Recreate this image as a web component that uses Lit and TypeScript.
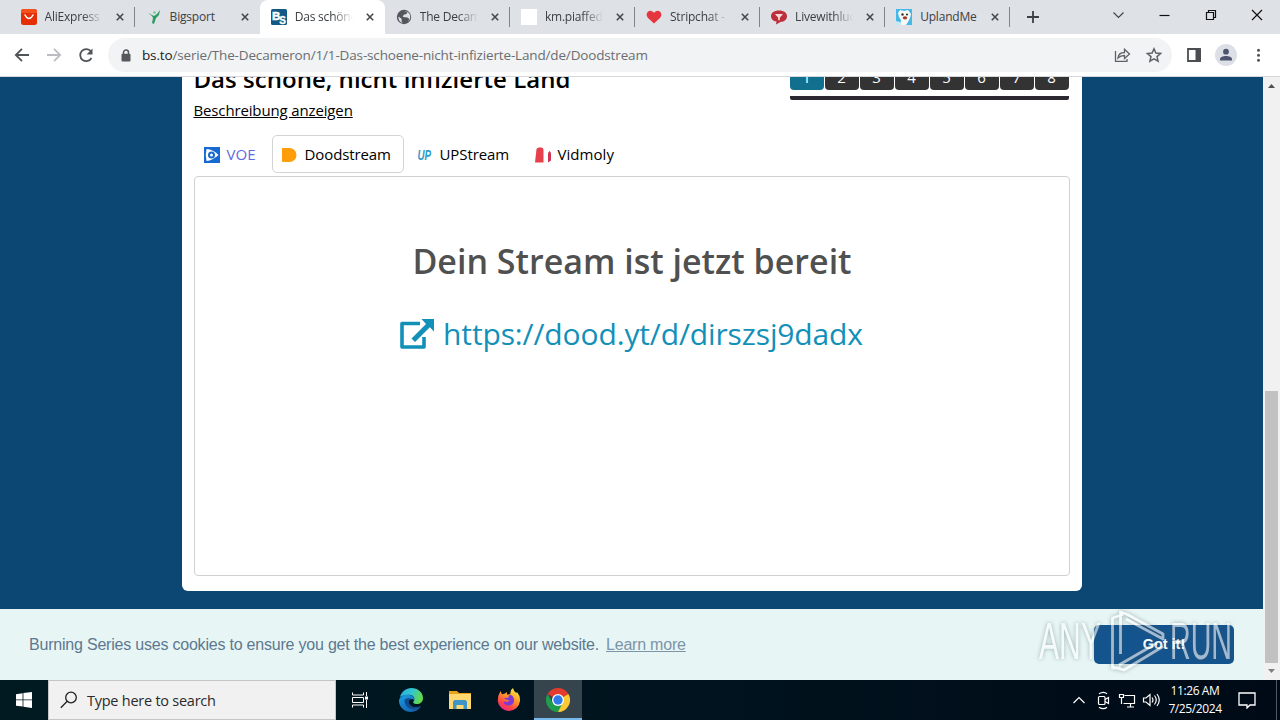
import { LitElement, html, css, svg } from 'lit';
import { customElement, property } from 'lit/decorators.js';
import { classMap } from 'lit/directives/class-map.js';

const favicons: Record<string, unknown> = {
  ali: svg`<rect width="16" height="16" rx="2.5" fill="#e62e04"/><path d="M0 2.5Q0 0 2.5 0h11Q16 0 16 2.5V4H0z" fill="#f4511a"/><path d="M4 6q4 7 8 0" fill="none" stroke="#fff" stroke-width="1.500" stroke-linecap="round"/>`,
  bigsport: svg`<path d="M2 4l6 3 3-2 3-4-1 5-3 3-2 6-2-1 1-5-1-2z" fill="#2c9a63"/><circle cx="8.500" cy="3.500" r="1.300" fill="#7cc79c"/>`,
  bs: svg`<rect width="16" height="16" rx="1.500" fill="#125a85"/><text x="1" y="10.500" font-family="Liberation Sans" font-weight="700" font-size="11.500" fill="#fff" stroke="#fff" stroke-width=".4">B</text><text x="8.300" y="14.500" font-family="Liberation Sans" font-weight="700" font-size="10" fill="#fff" stroke="#fff" stroke-width=".3">S</text>`,
  globe: svg`<circle cx="8" cy="8" r="7.200" fill="#53585d"/><path d="M2.300 7.500L5.600 9.800v2.700l1.200 1.700Q2.500 13 2.300 7.500zM8 2.200l3.400 1-1 1.900-2.700.6-1 2 2.200.5 2.600.4 1.800 1.500-1.200 2.600q3.300-3 1.700-7.400Q12 2 8 2.200z" fill="#dee1e6"/>`,
  blank: svg`<rect width="16" height="16" fill="#fff"/>`,
  heart: svg`<path d="M8 14.500L2 9Q-.5 6 1.500 3.200 4.500 0 8 3.800 11.500 0 14.500 3.200 16.500 6 14 9z" fill="#e5363f"/>`,
  live: svg`<path d="M8 1.500c5 0 8 2.300 8 5.700s-3 5.600-6 5.600L5 15.500l.5-3C2 12 0 10 0 7.200 0 3.800 3 1.500 8 1.500z" fill="#bd2f3b"/><path d="M4 5h8L8.800 8.700v2.600H7.200V8.700z" fill="#f4dcdc"/>`,
  upland: svg`<rect width="16" height="16" fill="#45b8e8"/><path d="M2 4l2-3 4 1 4-1 3 4-1 4-2 4-2 3H4l1-5-2-3z" fill="#f8f8f4"/><path d="M0 12l4 1 1 3H0z" fill="#c9e8f5"/><circle cx="6.500" cy="5.500" r="1.200" fill="#333"/><circle cx="11" cy="5.500" r="1.100" fill="#333"/><ellipse cx="9" cy="8.800" rx="2.200" ry="1.600" fill="#a33a2c"/>`,
};

const tabs = [
  { icon: 'ali', title: 'AliExpress' },
  { icon: 'bigsport', title: 'Bigsport' },
  { icon: 'bs', title: 'Das schöne', active: true },
  { icon: 'globe', title: 'The Decameron' },
  { icon: 'blank', title: 'km.piaffed' },
  { icon: 'heart', title: 'Stripchat - F' },
  { icon: 'live', title: 'Livewithlucy' },
  { icon: 'upland', title: 'UplandMe' },
];

const hosters = [
  { name: 'VOE', cls: 'voe', icon: svg`<rect width="16" height="16" fill="#1769d2"/><path d="M2.500 2Q9 2.500 14.500 8q-6 5.500-12 6-1.500-6 0-12z" fill="#fff"/><circle cx="7.500" cy="8" r="3.500" fill="#1769d2"/><circle cx="7.500" cy="8" r="1.500" fill="#fff"/>` },
  { name: 'Doodstream', cls: 'dood', icon: svg`<path d="M0 1h7.500a7 7 0 0 1 0 14H1Q0 15 0 14z" fill="#ff9d0a"/>` },
  { name: 'UPStream', cls: 'ups', icon: svg`<text x="0.500" y="13" textLength="13.500" lengthAdjust="spacingAndGlyphs" font-family="Liberation Sans" font-weight="700" font-style="italic" font-size="14.500" fill="#2f9cc9">UP</text>` },
  { name: 'Vidmoly', cls: 'vid', icon: svg`<path d="M0 15.500L1.500 2Q2 .5 4 .5h2.500Q8.500.5 8.500 3v12.500z" fill="#e6404c"/><path d="M13 15.500V7q0-2 1.500-3 1.500 1 1.500 3v6.500z" fill="#cf3552"/>` },
];

@customElement('browser-tab')
export class BrowserTab extends LitElement {
  @property() title = '';
  @property() icon = '';
  @property({ type: Boolean, reflect: true }) active = false;

  static styles = css`
    :host {
      display: flex;
      align-items: center;
      box-sizing: border-box;
      width: 125.1px;
      height: 34px;
      padding-left: 11px;
      flex: none;
    }
    :host([active]) {
      background: #fff;
      border-radius: 8px 8px 0 0;
    }
    .icon {
      width: 16px;
      height: 16px;
      margin-right: 8px;
      flex: none;
    }
    .title {
      width: 58px;
      overflow: hidden;
      white-space: nowrap;
      font: 12px/18px 'Open Sans', sans-serif;
      letter-spacing: -0.2px;
      color: #3c4043;
      -webkit-mask-image: linear-gradient(90deg, #000 65%, transparent);
      mask-image: linear-gradient(90deg, #000 65%, transparent);
    }
    .title.full {
      -webkit-mask-image: none;
      mask-image: none;
    }
    .close {
      width: 8px;
      height: 8px;
      margin-left: 13px;
    }
    .sep {
      width: 1px;
      height: 20px;
      margin-left: auto;
      background: #808489;
    }
    .sep.off {
      visibility: hidden;
    }
  `;

  render() {
    const full = this.title === 'Bigsport' || this.title === 'UplandMe';
    const off = this.active || this.icon === 'bigsport';
    return html`
      <svg class="icon" viewBox="0 0 16 16">${favicons[this.icon]}</svg>
      <span class=${classMap({ title: true, full })}>${this.title}</span>
      <svg class="close" viewBox="0 0 8 8"><path d="M.8.8l6.400 6.400M7.200.8L.8 7.200" stroke="#45494d" stroke-width="1.600"/></svg>
      <span class=${classMap({ sep: true, off })}></span>
    `;
  }
}

@customElement('windows-taskbar')
export class WindowsTaskbar extends LitElement {
  static styles = css`
    :host {
      display: flex;
      height: 40px;
      background: linear-gradient(90deg, #001a22, #00131e 55%, #000a17);
      color: #fff;
      font-family: 'Open Sans', sans-serif;
    }
    .start {
      width: 48px;
      display: flex;
      align-items: center;
      justify-content: center;
    }
    .search {
      box-sizing: border-box;
      width: 288px;
      display: flex;
      align-items: center;
      padding-left: 11px;
      background: #f1f1f1;
      border: 1px solid #c3c5c6;
      color: #2b2b2b;
      font-size: 14.5px;
      letter-spacing: -0.25px;
    }
    .search svg {
      margin-right: 9px;
    }
    .app {
      box-sizing: border-box;
      width: 49px;
      display: flex;
      align-items: center;
      justify-content: center;
    }
    .app.first {
      width: 50px;
    }
    .app.first svg {
      margin-right: 2px;
    }
    .app.current {
      width: 48px;
      margin-left: 1px;
      background: #35444d;
      border-bottom: 2px solid #76b9ed;
      padding-top: 2px;
    }
    .tray {
      display: flex;
      align-items: center;
      margin-left: auto;
    }
    .clock {
      width: 66px;
      text-align: center;
      font-size: 12px;
      line-height: 18px;
      letter-spacing: -0.4px;
    }
    .note {
      margin-left: 10px;
    }
    .edge {
      width: 3px;
      height: 40px;
      margin-left: 20px;
      border-left: 1px solid #515965;
    }
  `;

  render() {
    return html`
      <div class="start">
        <svg width="16" height="16" viewBox="0 0 16 16" fill="#fff"><path d="M0 2.200L6.600 1.200v6.300H0zM7.400 1.100L16 0v7.500H7.400zM0 8.300h6.600v6.300L0 13.700zM7.400 8.300H16V16l-8.600-1.200z"/></svg>
      </div>
      <div class="search">
        <svg width="18" height="18" viewBox="0 0 18 18" fill="none" stroke="#222" stroke-width="1.300"><circle cx="11" cy="6.500" r="5.300"/><path d="M7.200 10.300L.8 16.800"/></svg>
        <span>Type here to search</span>
      </div>
      <div class="app first">
        <svg width="17" height="16" viewBox="0 0 17 16" fill="none" stroke="#fff"><path d="M.5.500v2.500h11V.500M.5 15.500V13h11v2.500M.5 5.500h11v5H.5zM14.500 0v4M14.500 8v8"/><path d="M13 4.500h3v3h-3z" fill="#fff" stroke="none"/></svg>
      </div>
      <div class="app">
        <svg width="24" height="24" viewBox="0 0 24 24">
          <defs>
            <linearGradient id="eg" x1="0" y1="0" x2="1" y2=".3"><stop offset="0" stop-color="#2aa9e4"/><stop offset=".55" stop-color="#34c6cf"/><stop offset="1" stop-color="#62d84f"/></linearGradient>
            <linearGradient id="eb" x1="0" y1="0" x2=".7" y2="1"><stop offset="0" stop-color="#1b9de2"/><stop offset="1" stop-color="#1460ad"/></linearGradient>
          </defs>
          <path d="M1 9C2.500 3.500 7 0 12.300 0 19 0 24 4.500 24 10c0 4-3 6-6 6-3.200 0-4.600-1.300-3.300-2.800 2-3-.7-6.400-4.700-6.400C6 6.800 2.500 8 1 9z" fill="url(#eg)"/>
          <path d="M0 12.500C.5 8.500 5 6.500 9.500 6.800c4 .2 6.300 3 5.700 5.400C13.500 9.800 9.300 11 9.500 14c.3 4.200 6.300 6.800 12.300 4.300C19.800 22 16 24 12 24 5 24-.3 18.500 0 12.500z" fill="url(#eb)"/>
          <path d="M5.500 13c.5 5 4.500 8.500 9.700 8.300 3-.1 5.200-1.300 6.600-3-6 2.500-12-.1-12.300-4.300 0-1.700 1-2.900 2.500-3.200-3-1-6.300-.4-6.500 2.200z" fill="#124a8d"/>
        </svg>
      </div>
      <div class="app">
        <svg width="22" height="18" viewBox="0 0 22 18"><path d="M0 0h8l2 2h12v3H0z" fill="#e9a316"/><path d="M0 3h22v15H0z" fill="#ffd970"/><path d="M4 18v-7.500L5.500 9h11l1.500 1.500V18h-3.500v-4h-7v4z" fill="#3f95c8"/></svg>
      </div>
      <div class="app">
        <svg width="24" height="24" viewBox="0 0 24 24">
          <defs><linearGradient id="ff" x1=".8" y1="0" x2=".2" y2="1"><stop offset="0" stop-color="#fff04a"/><stop offset=".4" stop-color="#ff9a27"/><stop offset=".75" stop-color="#ff3f4d"/><stop offset="1" stop-color="#e5259a"/></linearGradient></defs>
          <path d="M3.500 3L5 6.200 8 5.500 9.500 4l1 3 3-1.500Q13 2 16 0q.5 3 3.300 5l.7-1q3.500 4 3 9A11.200 11.200 0 0 1 .8 13.500Q.5 8 3.500 3z" fill="url(#ff)"/>
          <path d="M7 10.500Q8.500 9.500 11 10l1.500-3.500Q17.500 8 17 13q-1 4.500-5.500 4.500T6.500 13.500l4 .5 2-1.300z" fill="#8039d5"/>
        </svg>
      </div>
      <div class="app current">
        <svg width="24" height="24" viewBox="0 0 24 24">
          <path d="M12 12L1.600 6A12 12 0 0 1 22.400 6z" fill="#e33b2e"/>
          <path d="M12 12L22.400 6A12 12 0 0 1 12 24z" fill="#fcc934"/>
          <path d="M12 12l4.800 2.700L12 24A12 12 0 0 1 1.600 6l5.200 9z" fill="#1f9c4c"/>
          <circle cx="12" cy="12" r="6" fill="#fff"/><circle cx="12" cy="12" r="4.700" fill="#2f7bea"/>
        </svg>
      </div>
      <div class="tray">
        <svg width="90" height="20" viewBox="0 0 90 20" fill="none" stroke="#fff" stroke-width="1.200">
          <path d="M1.500 13l5.500-5.500 5.500 5.500"/>
          <rect x="26.500" y="6.500" width="6.500" height="8" rx="1"/><path d="M33 9.500l3.500-2v6l-3.500-2M27 3.800q4.500-3 8 0M27 17.200q4.500 3 8 0"/>
          <path d="M52.500 5.500h10v8h-11M55 17h7M58.500 13.500V17M47.500 4.500h4v3h-4zM49.500 7.500V14"/>
          <path d="M71.500 8h2.500l4-3.500v11L74 12h-2.500zM80 7.500q2 2.500 0 5M82.500 5.500q3.500 4.500 0 9M85 4q4.500 6 0 12"/>
        </svg>
        <div class="clock">11:26 AM<br />7/25/2024</div>
        <svg class="note" width="18" height="18" viewBox="0 0 18 18" fill="none" stroke="#fff" stroke-width="1.300"><path d="M1 2h16v12h-5l-3 3v-3H1z"/></svg>
        <span class="edge"></span>
      </div>
    `;
  }
}

@customElement('app-root')
export class AppRoot extends LitElement {
  static styles = css`
    :host {
      position: relative;
      display: flex;
      flex-direction: column;
      width: 1280px;
      height: 720px;
      overflow: hidden;
      font-family: 'Open Sans', sans-serif;
    }
    .tabstrip {
      display: flex;
      align-items: center;
      height: 34px;
      padding-left: 9.5px;
      background: #dee1e6;
    }
    .plus {
      margin-left: 17px;
    }
    .window {
      margin: -4px 17px 0 auto;
    }
    .toolbar {
      box-sizing: border-box;
      display: flex;
      align-items: center;
      height: 43px;
      border-bottom: 1px solid #d5d7da;
      background: #fff;
    }
    .nav {
      width: 108px;
    }
    .omnibox {
      box-sizing: border-box;
      display: flex;
      align-items: center;
      width: 1064px;
      height: 34px;
      padding: 0 10px 0 13px;
      border-radius: 17px;
      background: #f1f3f4;
    }
    .url {
      margin-left: 11px;
      font-size: 13.5px;
      letter-spacing: -0.155px;
      color: #6a6e73;
      white-space: nowrap;
    }
    .url b {
      font-weight: 400;
      color: #202124;
    }
    .share {
      margin-left: auto;
    }
    .more {
      margin-left: 14px;
    }
    .viewport {
      display: flex;
      height: 603px;
      overflow: hidden;
    }
    .page {
      display: flex;
      flex-direction: column;
      align-items: center;
      width: 1263px;
      background: #0c4673;
    }
    .card {
      box-sizing: border-box;
      width: 900px;
      height: 532px;
      margin-top: -18px;
      padding: 0 12px 0;
      border-radius: 6px;
      background: #fff;
      flex: none;
    }
    .head {
      display: flex;
      justify-content: space-between;
      height: 69px;
    }
    h2 {
      margin: 3px 0 0;
      font-size: 24px;
      line-height: 34px;
      font-weight: 600;
      letter-spacing: 0.03px;
      color: #000;
    }
    .desc {
      display: inline-block;
      margin-top: 3px;
      font-size: 15px;
      line-height: 22px;
      letter-spacing: -0.14px;
      color: #000;
      text-decoration: underline;
    }
    .episodes {
      display: flex;
      gap: 1px;
      width: 279px;
      height: 41px;
      margin-right: 1px;
      padding-top: 4px;
      box-sizing: border-box;
      border-bottom: 4px solid #2b2832;
      border-radius: 2px;
    }
    .episode {
      width: 34px;
      height: 27px;
      border-radius: 4px;
      background: #333;
      color: #fff;
      font-size: 15px;
      line-height: 29px;
      text-align: center;
    }
    .episode.on {
      background: #12708f;
    }
    .hosters {
      display: flex;
      height: 38px;
      margin-top: 7px;
    }
    .hoster {
      box-sizing: border-box;
      display: flex;
      align-items: center;
      padding-left: 9px;
      border: 1px solid transparent;
      border-radius: 5px;
      font-size: 15px;
      letter-spacing: -0.1px;
      color: #000;
    }
    .hoster svg {
      margin: 2px 7px 0 0;
    }
    .voe {
      width: 78px;
      color: #5f6ae0;
      letter-spacing: 0.1px;
    }
    .dood {
      width: 132px;
      border-color: #d3d3d3;
    }
    .ups {
      width: 120px;
      padding-left: 12px;
    }
    .vid {
      padding-left: 10px;
      letter-spacing: 0.05px;
    }
    .player {
      box-sizing: border-box;
      display: flex;
      flex-direction: column;
      align-items: center;
      width: 876px;
      height: 400px;
      margin-top: 3px;
      padding-top: 59px;
      border: 1px solid #d0d0d0;
      border-radius: 4px;
    }
    h1 {
      margin: 0 -1px 0 0;
      font-size: 34px;
      line-height: 50px;
      font-weight: 600;
      color: #505050;
      white-space: nowrap;
    }
    .link {
      display: flex;
      align-items: center;
      gap: 9px;
      margin-top: 24px;
      font-size: 30px;
      line-height: 48px;
      letter-spacing: -0.13px;
      color: #1290b8;
    }
    .cookie {
      box-sizing: border-box;
      display: flex;
      align-items: center;
      width: 1263px;
      height: 71px;
      margin-top: auto;
      padding: 0 29px;
      background: #e7f6f5;
      color: #5d7890;
      font: 16px/24px 'Liberation Sans', sans-serif;
      letter-spacing: -0.21px;
    }
    .learn {
      margin-left: 7px;
      color: #7d93a6;
      text-decoration: underline;
    }
    .gotit {
      width: 140px;
      height: 39px;
      margin-left: auto;
      border-radius: 5px;
      background: #14548e;
      color: #fff;
      font: bold 14.4px/39px 'Liberation Sans', sans-serif;
      letter-spacing: 0;
      text-align: center;
    }
    .scroll {
      display: flex;
      flex-direction: column;
      align-items: center;
      width: 17px;
      background: #f1f1f1;
    }
    .thumb {
      width: 13px;
      height: 272px;
      margin-top: 303px;
      background: #c1c1c1;
    }
    .up {
      margin-top: 7px;
    }
    .down {
      margin-top: 6px;
    }
    .watermark {
      position: absolute;
      left: 1030px;
      top: 604px;
      opacity: 0.6;
      filter: drop-shadow(0 0 2px rgba(60, 80, 90, 0.75));
    }
  `;

  _renderToolbar() {
    return html`
      <div class="toolbar">
        <svg class="nav" width="108" height="34" viewBox="0 0 108 34" fill="none" stroke="#505458" stroke-width="1.800">
          <path d="M29 17H16M22 10.800L15.800 17l6.200 6.200"/>
          <path d="M47 17h13M54 10.800l6.200 6.200-6.200 6.200" stroke="#bbbdc0"/>
          <path d="M91.500 20a6 6 0 1 1-.5-6.500"/><path d="M92.500 10.500v6h-6z" fill="#505458" stroke="none"/>
        </svg>
        <div class="omnibox">
          <svg width="10" height="13" viewBox="0 0 10 13"><path d="M2.500 6V3.500a2.500 2.500 0 0 1 5 0V6" fill="none" stroke="#55595d" stroke-width="1.500"/><rect x=".5" y="4.800" width="9" height="7.700" rx="1" fill="#55595d"/></svg>
          <span class="url"><b>bs.to</b>/serie/The-Decameron/1/1-Das-schoene-nicht-infizierte-Land/de/Doodstream</span>
          <svg class="share" width="48" height="16" viewBox="0 0 48 16" fill="none" stroke="#5f6368" stroke-width="1.300">
            <path d="M1.500 4v10.300h11.500V12M4 11Q4.500 5.500 10.500 5.500V2.200L15.500 7l-5 4.500V8.500Q6.500 8.500 4 11z"/>
            <path d="M40 1.800l1.900 4.300 4.700.4-3.600 3.100 1.100 4.600-4.100-2.400-4.100 2.400L37 9.600 33.400 6.500l4.700-.4z" stroke-width="1.500"/>
          </svg>
        </div>
        <svg class="more" width="80" height="24" viewBox="0 0 80 24">
          <path d="M2 6h12v12H2z" fill="none" stroke="#4a4e52" stroke-width="1.800"/><path d="M9.500 6H15v12H9.500z" fill="#4a4e52"/>
          <circle cx="40" cy="12" r="11" fill="#dcdfe6"/><circle cx="40" cy="8.700" r="2.900" fill="#4c5470"/><path d="M34 17.500v-1.300c0-2 3-3.200 6-3.200s6 1.200 6 3.200v1.300z" fill="#4c5470"/>
          <g fill="#505458"><circle cx="72.500" cy="7.300" r="1.500"/><circle cx="72.500" cy="12.300" r="1.500"/><circle cx="72.500" cy="17.300" r="1.500"/></g>
        </svg>
      </div>
    `;
  }

  render() {
    return html`
      <div class="tabstrip">
        ${tabs.map((t) => html`<browser-tab .title=${t.title} .icon=${t.icon} ?active=${!!t.active}></browser-tab>`)}
        <svg class="plus" width="12" height="12" viewBox="0 0 12 12"><path d="M6 0v12M0 6h12" stroke="#3c4043" stroke-width="1.800"/></svg>
        <svg class="window" width="150" height="12" viewBox="0 0 150 12" fill="none" stroke="#111" stroke-width="1.200">
          <path d="M.5 3.500l5 5 5-5" stroke="#444"/><path d="M46.500 6.500h10"/><path d="M93.500 3.500h7v7h-7zM95.500 3.500v-2h7v7h-2"/><path d="M139 1l10 10M149 1l-10 10"/>
        </svg>
      </div>
      ${this._renderToolbar()}
      <div class="viewport">
        <div class="page">
          <div class="card">
            <div class="head">
              <div>
                <h2>Das schöne, nicht infizierte Land</h2>
                <span class="desc">Beschreibung anzeigen</span>
              </div>
              <div class="episodes">
                ${[1, 2, 3, 4, 5, 6, 7, 8].map((n) => html`<span class=${classMap({ episode: true, on: n === 1 })}>${n}</span>`)}
              </div>
            </div>
            <div class="hosters">
              ${hosters.map((h) => html`
                <div class="hoster ${h.cls}">
                  <svg width="16" height="16" viewBox="0 0 16 16">${h.icon}</svg>
                  <span>${h.name}</span>
                </div>
              `)}
            </div>
            <div class="player">
              <h1>Dein Stream ist jetzt bereit</h1>
              <div class="link">
                <svg width="34" height="32" viewBox="0 0 34 32"><path d="M20 5.500H2V29h22V19" fill="none" stroke="#1290b8" stroke-width="3.600" stroke-linejoin="round"/><path d="M21.500 1H34v12.500l-4.200-4.200L15 24l-3.500-3.500L26 6z" fill="#1290b8"/></svg>
                <span>https://dood.yt/d/dirszsj9dadx</span>
              </div>
            </div>
          </div>
          <div class="cookie">
            <span>Burning Series uses cookies to ensure you get the best experience on our website.</span>
            <span class="learn">Learn more</span>
            <span class="gotit">Got it!</span>
          </div>
        </div>
        <div class="scroll">
          <svg class="up" width="7" height="4" viewBox="0 0 7 4"><path d="M0 4l3.500-4L7 4z" fill="#505050"/></svg>
          <div class="thumb"></div>
          <svg class="down" width="7" height="4" viewBox="0 0 7 4"><path d="M0 0l3.500 4L7 0z" fill="#808080"/></svg>
        </div>
      </div>
      <windows-taskbar></windows-taskbar>
      <svg class="watermark" width="210" height="76" viewBox="0 0 210 76" fill="none" stroke="#fff" stroke-width="2.800" stroke-linejoin="round">
        <g font-family="Liberation Sans" font-size="51" fill="#fff" stroke="none">
          <text x="9" y="55" textLength="62" lengthAdjust="spacingAndGlyphs">ANY</text>
          <text x="140" y="55" textLength="62" lengthAdjust="spacingAndGlyphs">RUN</text>
        </g>
        <path d="M93 10.500L82.500 14v50h8M90.500 50V8l7 2.500L133 30v5L96 15M83 63l11 3 39-23.500M89 61l38-22"/>
      </svg>
    `;
  }
}
